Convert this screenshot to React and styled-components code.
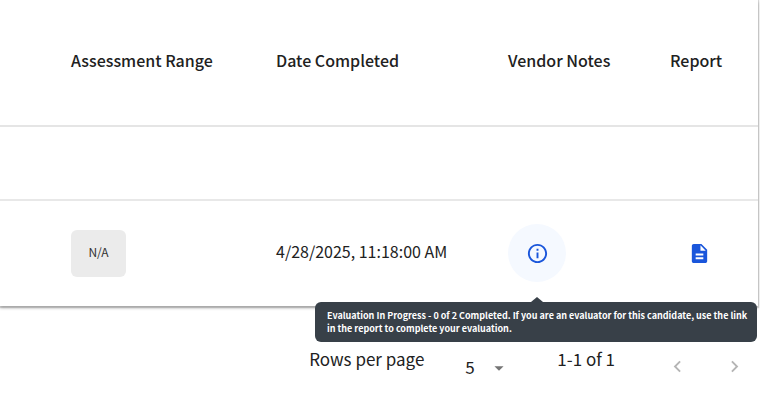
import React from 'react';
import styled, { createGlobalStyle } from 'styled-components';

const GlobalStyle = createGlobalStyle`
  *, *::before, *::after {
    box-sizing: border-box;
  }

  body {
    margin: 0;
    background: #fff;
    color: #212121;
    font-family: 'Noto Sans CJK SC', 'Noto Sans', sans-serif;
    font-size: 16px;
    line-height: 24px;
  }

  button, select {
    font: inherit;
    color: inherit;
  }
`;

const TableCard = styled.section`
  margin-right: 2px;
  background: #fff;
  box-shadow: 0 1px 1px 1px rgba(0, 0, 0, 0.14), 0 2px 3px rgba(0, 0, 0, 0.26);
`;

const Table = styled.table`
  width: 100%;
  border-collapse: separate;
  border-spacing: 0;
  table-layout: fixed;
`;

const HeadCell = styled.th`
  width: ${props => props.$width || 'auto'};
  height: 127px;
  padding: 0 16px 6px;
  border-bottom: 2px solid #e5e5e5;
  font-weight: 500;
  text-align: left;
  white-space: nowrap;

  &:first-child {
    padding-left: 71px;
  }
`;

const FilterCell = styled.td`
  height: 74px;
  padding: 0;
  border-bottom: 2px solid #e8e8e8;
`;

const Cell = styled.td`
  height: 105px;
  padding: 0 16px 1px;
  white-space: nowrap;

  &:first-child {
    padding-left: 71px;
  }
`;

const DateText = styled.time`
  display: block;
  padding-bottom: 4px;
`;

const RangeBadge = styled.span`
  display: flex;
  align-items: center;
  justify-content: center;
  width: 55px;
  height: 47px;
  padding-bottom: 2px;
  border-radius: 6px;
  background: #ebebeb;
  color: #333;
  font-size: 12px;
`;

const TooltipAnchor = styled.div`
  position: relative;
  width: 58px;
`;

const IconButton = styled.button`
  display: flex;
  align-items: center;
  justify-content: center;
  width: 58px;
  height: 58px;
  padding: 0;
  border: 0;
  border-radius: 50%;
  background: ${props => (props.$active ? '#f5f9ff' : 'transparent')};
  color: #1a56db;
  cursor: pointer;
`;

const Tooltip = styled.div`
  position: absolute;
  z-index: 1;
  top: 78px;
  right: -191px;
  width: 442px;
  padding: 7px 6px 7px 12px;
  border-radius: 6px;
  background: #384048;
  color: #fff;
  font-size: 9px;
  font-weight: 700;
  line-height: 13px;
  white-space: normal;

  &::before {
    content: '';
    position: absolute;
    top: -5px;
    right: 214px;
    border: 6px solid transparent;
    border-top: 0;
    border-bottom: 5px solid #384048;
  }
`;

const Pagination = styled.nav`
  display: flex;
  align-items: center;
  justify-content: flex-end;
  height: 97px;
  padding: 24px 2px 0 0;
`;

const PageLabel = styled.label`
  padding-bottom: 15px;
  font-size: 17px;
`;

const PageRange = styled.span`
  margin: 0 38px 0 47px;
  padding-bottom: 15px;
  font-size: 17px;
`;

const SelectBox = styled.div`
  position: relative;
  width: 45px;
  margin-left: 41px;

  svg {
    position: absolute;
    top: 2px;
    right: 0;
    pointer-events: none;
  }
`;

const RowsSelect = styled.select`
  display: block;
  width: 100%;
  padding: 0;
  border: 0;
  background: transparent;
  font-size: 17px;
  line-height: 24px;
  appearance: none;
`;

const PageButton = styled.button`
  display: flex;
  align-items: center;
  justify-content: center;
  width: 48px;
  height: 48px;
  padding: 0;
  border: 0;
  background: transparent;
  color: #b5b5b5;

  & + & {
    margin-left: 9px;
  }
`;

const paths = {
  info: 'M11 7h2v2h-2zm0 4h2v6h-2zm1-9C6.48 2 2 6.48 2 12s4.48 10 10 10 10-4.48 10-10S17.52 2 12 2m0 18c-4.41 0-8-3.59-8-8s3.59-8 8-8 8 3.59 8 8-3.59 8-8 8',
  report: 'M14 2H6c-1.1 0-1.99.9-1.99 2L4 20c0 1.1.89 2 1.99 2H18c1.1 0 2-.9 2-2V8zm2 16H8v-2h8zm0-4H8v-2h8zm-3-5V3.5L18.5 9z',
  caret: 'm7 10 5 5 5-5z',
  prev: 'M15.41 7.41 14 6l-6 6 6 6 1.41-1.41L10.83 12z',
  next: 'M10 6 8.59 7.41 13.17 12l-4.58 4.59L10 18l6-6z',
};

const Icon = ({ name, size = 23, color = 'currentColor' }) => (
  <svg width={size} height={size} viewBox="0 0 24 24" fill={color} aria-hidden="true">
    <path d={paths[name]} />
  </svg>
);

const columns = [
  { title: 'Assessment Range', width: '260px' },
  { title: 'Date Completed', width: '232px' },
  { title: 'Vendor Notes', width: '162px' },
  { title: 'Report' },
];

const App = () => {
  return (
    <>
      <GlobalStyle />
      <TableCard>
        <Table>
          <thead>
            <tr>
              {columns.map((column) => (
                <HeadCell key={column.title} scope="col" $width={column.width}>
                  {column.title}
                </HeadCell>
              ))}
            </tr>
          </thead>
          <tbody>
            <tr>
              <FilterCell colSpan={4} />
            </tr>
            <tr>
              <Cell>
                <RangeBadge>N/A</RangeBadge>
              </Cell>
              <Cell>
                <DateText dateTime="2025-04-28T11:18:00">4/28/2025, 11:18:00 AM</DateText>
              </Cell>
              <Cell>
                <TooltipAnchor>
                  <IconButton $active aria-label="Vendor notes" aria-describedby="vendor-tip">
                    <Icon name="info" />
                  </IconButton>
                  <Tooltip id="vendor-tip" role="tooltip">
                    Evaluation In Progress - 0 of 2 Completed. If you are an evaluator for this candidate, use the link in the report to complete your evaluation.
                  </Tooltip>
                </TooltipAnchor>
              </Cell>
              <Cell>
                <IconButton aria-label="Open report">
                  <Icon name="report" />
                </IconButton>
              </Cell>
            </tr>
          </tbody>
        </Table>
      </TableCard>
      <Pagination aria-label="Pagination">
        <PageLabel htmlFor="rows-per-page">Rows per page</PageLabel>
        <SelectBox>
          <RowsSelect id="rows-per-page" defaultValue="5">
            <option value="5">5</option>
          </RowsSelect>
          <Icon name="caret" color="#757575" size={22} />
        </SelectBox>
        <PageRange>1-1 of 1</PageRange>
        <PageButton aria-label="Previous page" disabled>
          <Icon name="prev" />
        </PageButton>
        <PageButton aria-label="Next page" disabled>
          <Icon name="next" />
        </PageButton>
      </Pagination>
    </>
  );
};

export default App;
